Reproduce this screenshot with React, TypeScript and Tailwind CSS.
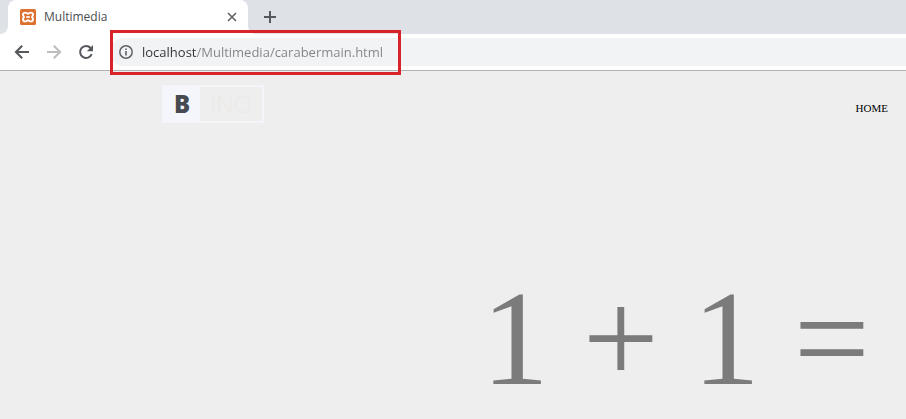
import React, { useState } from 'react';

function TabFoot({ flip = false }: { flip?: boolean }) {
  return (
    <svg viewBox="0 0 8 8" className={flip ? 'h-2 w-2 -scale-x-100' : 'h-2 w-2'} aria-hidden="true">
      <path d="M8 0v8H0a8 8 0 0 0 8-8z" fill="#fff" />
    </svg>
  );
}

function XamppIcon() {
  return (
    <svg viewBox="0 0 16 16" className="size-4 shrink-0" aria-hidden="true">
      <rect width="16" height="16" rx="1.5" fill="#dd7130" />
      <path
        d="M5.200 3.600c1.500 0 1.900 1.200 2.800 1.200s1.300-1.200 2.800-1.200c1.300 0 2.200 1 2.200 2.200 0 1.100-.9 1.400-.9 2.200s.9 1.100.9 2.200c0 1.200-.9 2.200-2.200 2.200-1.500 0-1.900-1.200-2.800-1.200s-1.300 1.200-2.800 1.200C3.900 12.400 3 11.400 3 10.200c0-1.100.9-1.400.9-2.200S3 6.900 3 5.800c0-1.200.9-2.200 2.200-2.200z"
        fill="none"
        stroke="#fff"
        strokeWidth="1.900"
      />
      <path d="M6.200 8h3.600" fill="none" stroke="#fff" strokeWidth="1.700" />
    </svg>
  );
}

function BrowserTab() {
  return (
    <div className="flex items-end">
      <TabFoot />
      <div role="tab" aria-selected="true" className="flex h-[34px] w-60 items-center gap-2 rounded-t-lg bg-white pr-2.5 pl-3">
        <XamppIcon />
        <span className="flex-1 text-xs leading-4 text-[#4a4d51]">Multimedia</span>
        <button type="button" aria-label="Close tab" className="flex size-3 items-center justify-center">
          <svg viewBox="0 0 12 12" className="size-3">
            <path d="M2 2l8 8M10 2l-8 8" stroke="#5f6368" strokeWidth="1.600" />
          </svg>
        </button>
      </div>
      <TabFoot flip />
    </div>
  );
}

function Toolbar() {
  const [url, setUrl] = useState('localhost/Multimedia/carabermain.html');
  return (
    <div className="flex h-[37px] items-center border-b border-[#b2b2b2] bg-white pl-3.5">
      <div className="flex items-center gap-4">
        <button type="button" aria-label="Back" className="size-4">
          <svg viewBox="0 0 16 16" className="size-4">
            <path d="M15 8H2.200M8.200 1.700L1.900 8l6.300 6.300" fill="none" stroke="#55585c" strokeWidth="2" />
          </svg>
        </button>
        <button type="button" aria-label="Forward" className="size-4">
          <svg viewBox="0 0 16 16" className="size-4">
            <path d="M1 8h12.800M7.800 1.700L14.100 8l-6.300 6.300" fill="none" stroke="#bcbdbf" strokeWidth="2" />
          </svg>
        </button>
        <button type="button" aria-label="Reload" className="size-4">
          <svg viewBox="0 0 16 16" className="size-4">
            <path d="M13.700 10.200A6 6 0 1 1 12.600 4" fill="none" stroke="#55585c" strokeWidth="2" />
            <path d="M15 1v6.200H8.800z" fill="#55585c" />
          </svg>
        </button>
      </div>
      <div className="relative ml-4 flex h-7 flex-1 items-center gap-2 rounded-l-full bg-[#f1f3f4] pl-2">
        <svg viewBox="0 0 16 16" className="size-4 shrink-0" aria-hidden="true">
          <circle cx="8" cy="8" r="6.200" fill="none" stroke="#5f6368" strokeWidth="1.500" />
          <path d="M8 7v4.400M8 4.400v1.600" stroke="#5f6368" strokeWidth="1.600" />
        </svg>
        <input
          type="text"
          aria-label="Address"
          value={url}
          onChange={(e) => setUrl(e.target.value)}
          className="h-6 min-w-0 flex-1 bg-linear-to-r from-[#303236] from-[54px] to-[#808488] to-[54px] bg-clip-text text-[13px] text-[#808488] outline-none [-webkit-text-fill-color:transparent]"
        />
        <div className="pointer-events-none absolute -top-2 left-0 h-[45px] w-[291px] border-3 border-[#d9232b]" />
      </div>
    </div>
  );
}

function Logo() {
  return (
    <a href="#home" aria-label="BINO" className="flex h-[38px] w-[102px] border-2 border-[#f4f5f8] font-['Open_Sans',sans-serif]">
      <span className="flex w-9 items-center justify-center bg-[#f4f6fb] text-2xl font-extrabold text-[#474a50]">B</span>
      <span className="flex flex-1 items-center justify-center text-2xl font-light text-[#ece9e7]">INO</span>
    </a>
  );
}

export default function App() {
  return (
    <div className="flex min-h-screen flex-col bg-[#eee] font-['Open_Sans','Noto_Sans',sans-serif]">
      <header>
        <div className="flex bg-[#dee1e6]">
          <BrowserTab />
          <button type="button" aria-label="New tab" className="ml-1.5 flex h-[34px] w-4 items-center justify-center">
            <svg viewBox="0 0 14 14" className="size-3.5">
              <path d="M7 1v12M1 7h12" stroke="#55585c" strokeWidth="2" />
            </svg>
          </button>
        </div>
        <Toolbar />
      </header>
      <main className="font-['Liberation_Serif',serif]">
        <nav className="flex items-center justify-between pt-3.5 pr-[18px] pl-[162px]">
          <Logo />
          <a href="#home" className="pt-2 text-[11px] leading-4 text-black">HOME</a>
        </nav>
        <p className="mt-36 pr-9 text-right text-[135px] leading-[144px] whitespace-nowrap text-[#7b7b7b]">1 + 1 =</p>
      </main>
    </div>
  );
}
